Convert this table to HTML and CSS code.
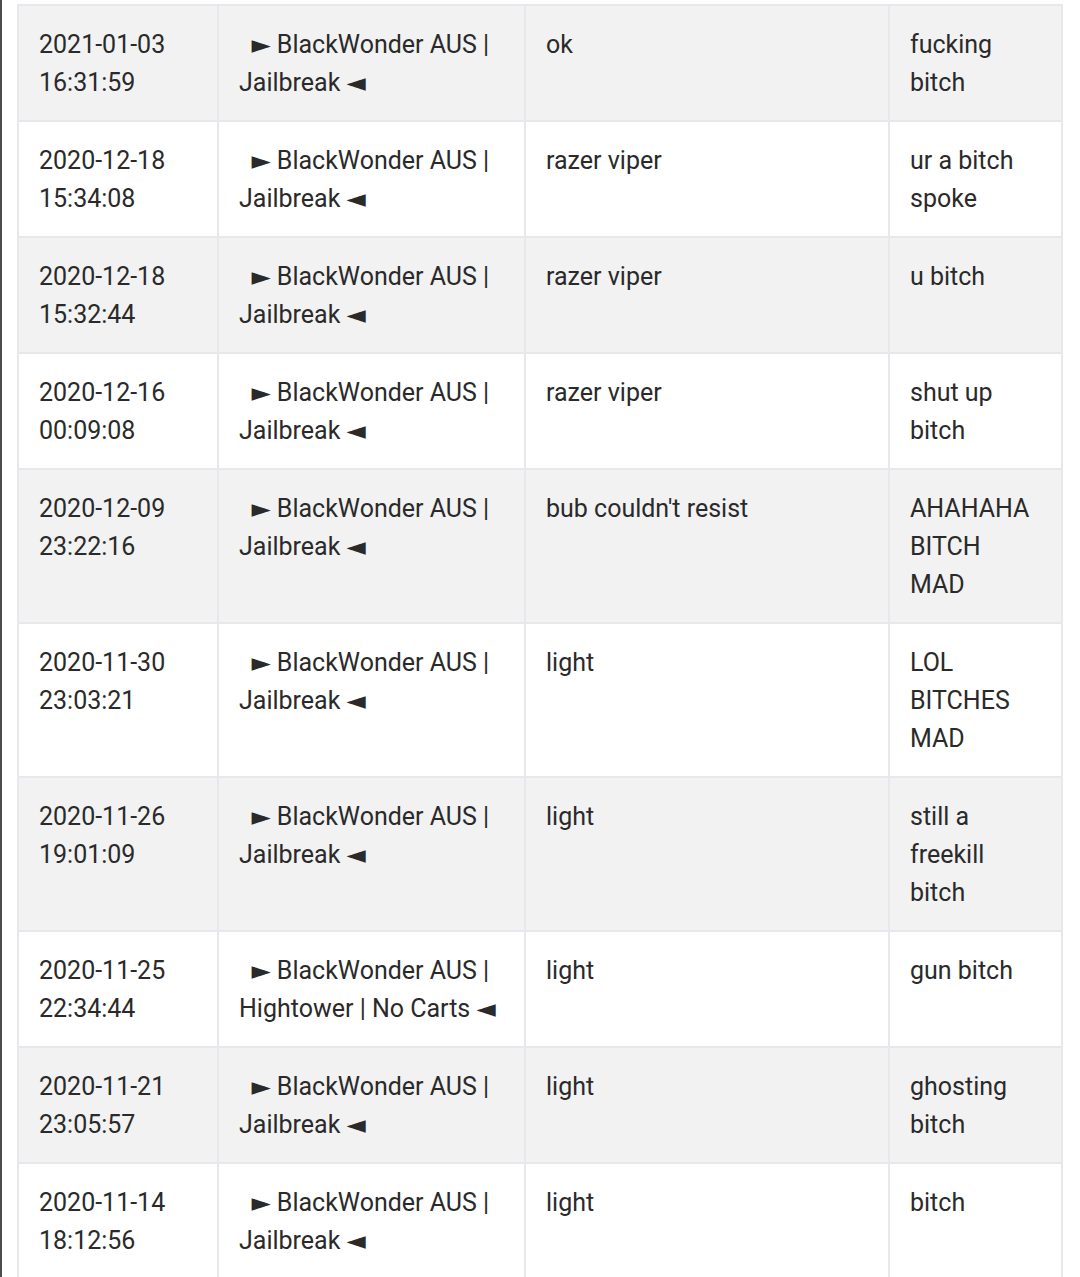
FILE: index.html
```html
<!DOCTYPE html>
<html>
<head>
<meta charset="utf-8">
<link rel="stylesheet" href="styles.css">
</head>
<body>
<div class="frame">
<table class="log">
<colgroup>
<col class="c-date"><col class="c-server"><col class="c-name"><col class="c-msg">
</colgroup>
<tbody>
<tr><td>2021-01-03 16:31:59</td><td class="srv">  ► BlackWonder AUS | Jailbreak ◄</td><td>ok</td><td class="msg">fucking bitch</td></tr>
<tr><td>2020-12-18 15:34:08</td><td class="srv">  ► BlackWonder AUS | Jailbreak ◄</td><td>razer viper</td><td class="msg">ur a bitch spoke</td></tr>
<tr><td>2020-12-18 15:32:44</td><td class="srv">  ► BlackWonder AUS | Jailbreak ◄</td><td>razer viper</td><td class="msg">u bitch</td></tr>
<tr><td>2020-12-16 00:09:08</td><td class="srv">  ► BlackWonder AUS | Jailbreak ◄</td><td>razer viper</td><td class="msg">shut up bitch</td></tr>
<tr><td>2020-12-09 23:22:16</td><td class="srv">  ► BlackWonder AUS | Jailbreak ◄</td><td>bub couldn't resist</td><td class="msg">AHAHAHA BITCH MAD</td></tr>
<tr><td>2020-11-30 23:03:21</td><td class="srv">  ► BlackWonder AUS | Jailbreak ◄</td><td>light</td><td class="msg">LOL BITCHES MAD</td></tr>
<tr><td>2020-11-26 19:01:09</td><td class="srv">  ► BlackWonder AUS | Jailbreak ◄</td><td>light</td><td class="msg">still a freekill bitch</td></tr>
<tr><td>2020-11-25 22:34:44</td><td class="srv">  ► BlackWonder AUS | Hightower | No Carts ◄</td><td>light</td><td class="msg">gun bitch</td></tr>
<tr><td>2020-11-21 23:05:57</td><td class="srv">  ► BlackWonder AUS | Jailbreak ◄</td><td>light</td><td class="msg">ghosting bitch</td></tr>
<tr><td>2020-11-14 18:12:56</td><td class="srv">  ► BlackWonder AUS | Jailbreak ◄</td><td>light</td><td class="msg">bitch</td></tr>
</tbody>
</table>
</div>
</body>
</html>
```

FILE: styles.css
```css
html, body {
  margin: 0;
  padding: 0;
  background: #ffffff;
}
.frame {
  border-left: 2px solid #4d4d4d;
  min-height: 1277px;
  padding: 4px 0 0 15px;
  box-sizing: border-box;
}
.log {
  border-collapse: collapse;
  table-layout: fixed;
  width: 1044px;
  font-family: Roboto, "Noto Sans", "DejaVu Sans", sans-serif;
  font-size: 25px;
  line-height: 38px;
  color: #2a2a2a;
  border-top: 2px solid #e3e6ea;
}
.c-date { width: 200px; }
.c-server { width: 307px; }
.c-name { width: 364px; }
.c-msg { width: 173px; }
.log td {
  border: 2px solid #e6e8ec;
  padding: 20px 18px 18px 20px;
  vertical-align: top;
  word-wrap: break-word;
}
.log td.msg {
  padding-right: 27px;
}
.log tr:nth-child(odd) td {
  background: #f2f2f2;
}
.srv {
  white-space: pre-wrap;
}
```
